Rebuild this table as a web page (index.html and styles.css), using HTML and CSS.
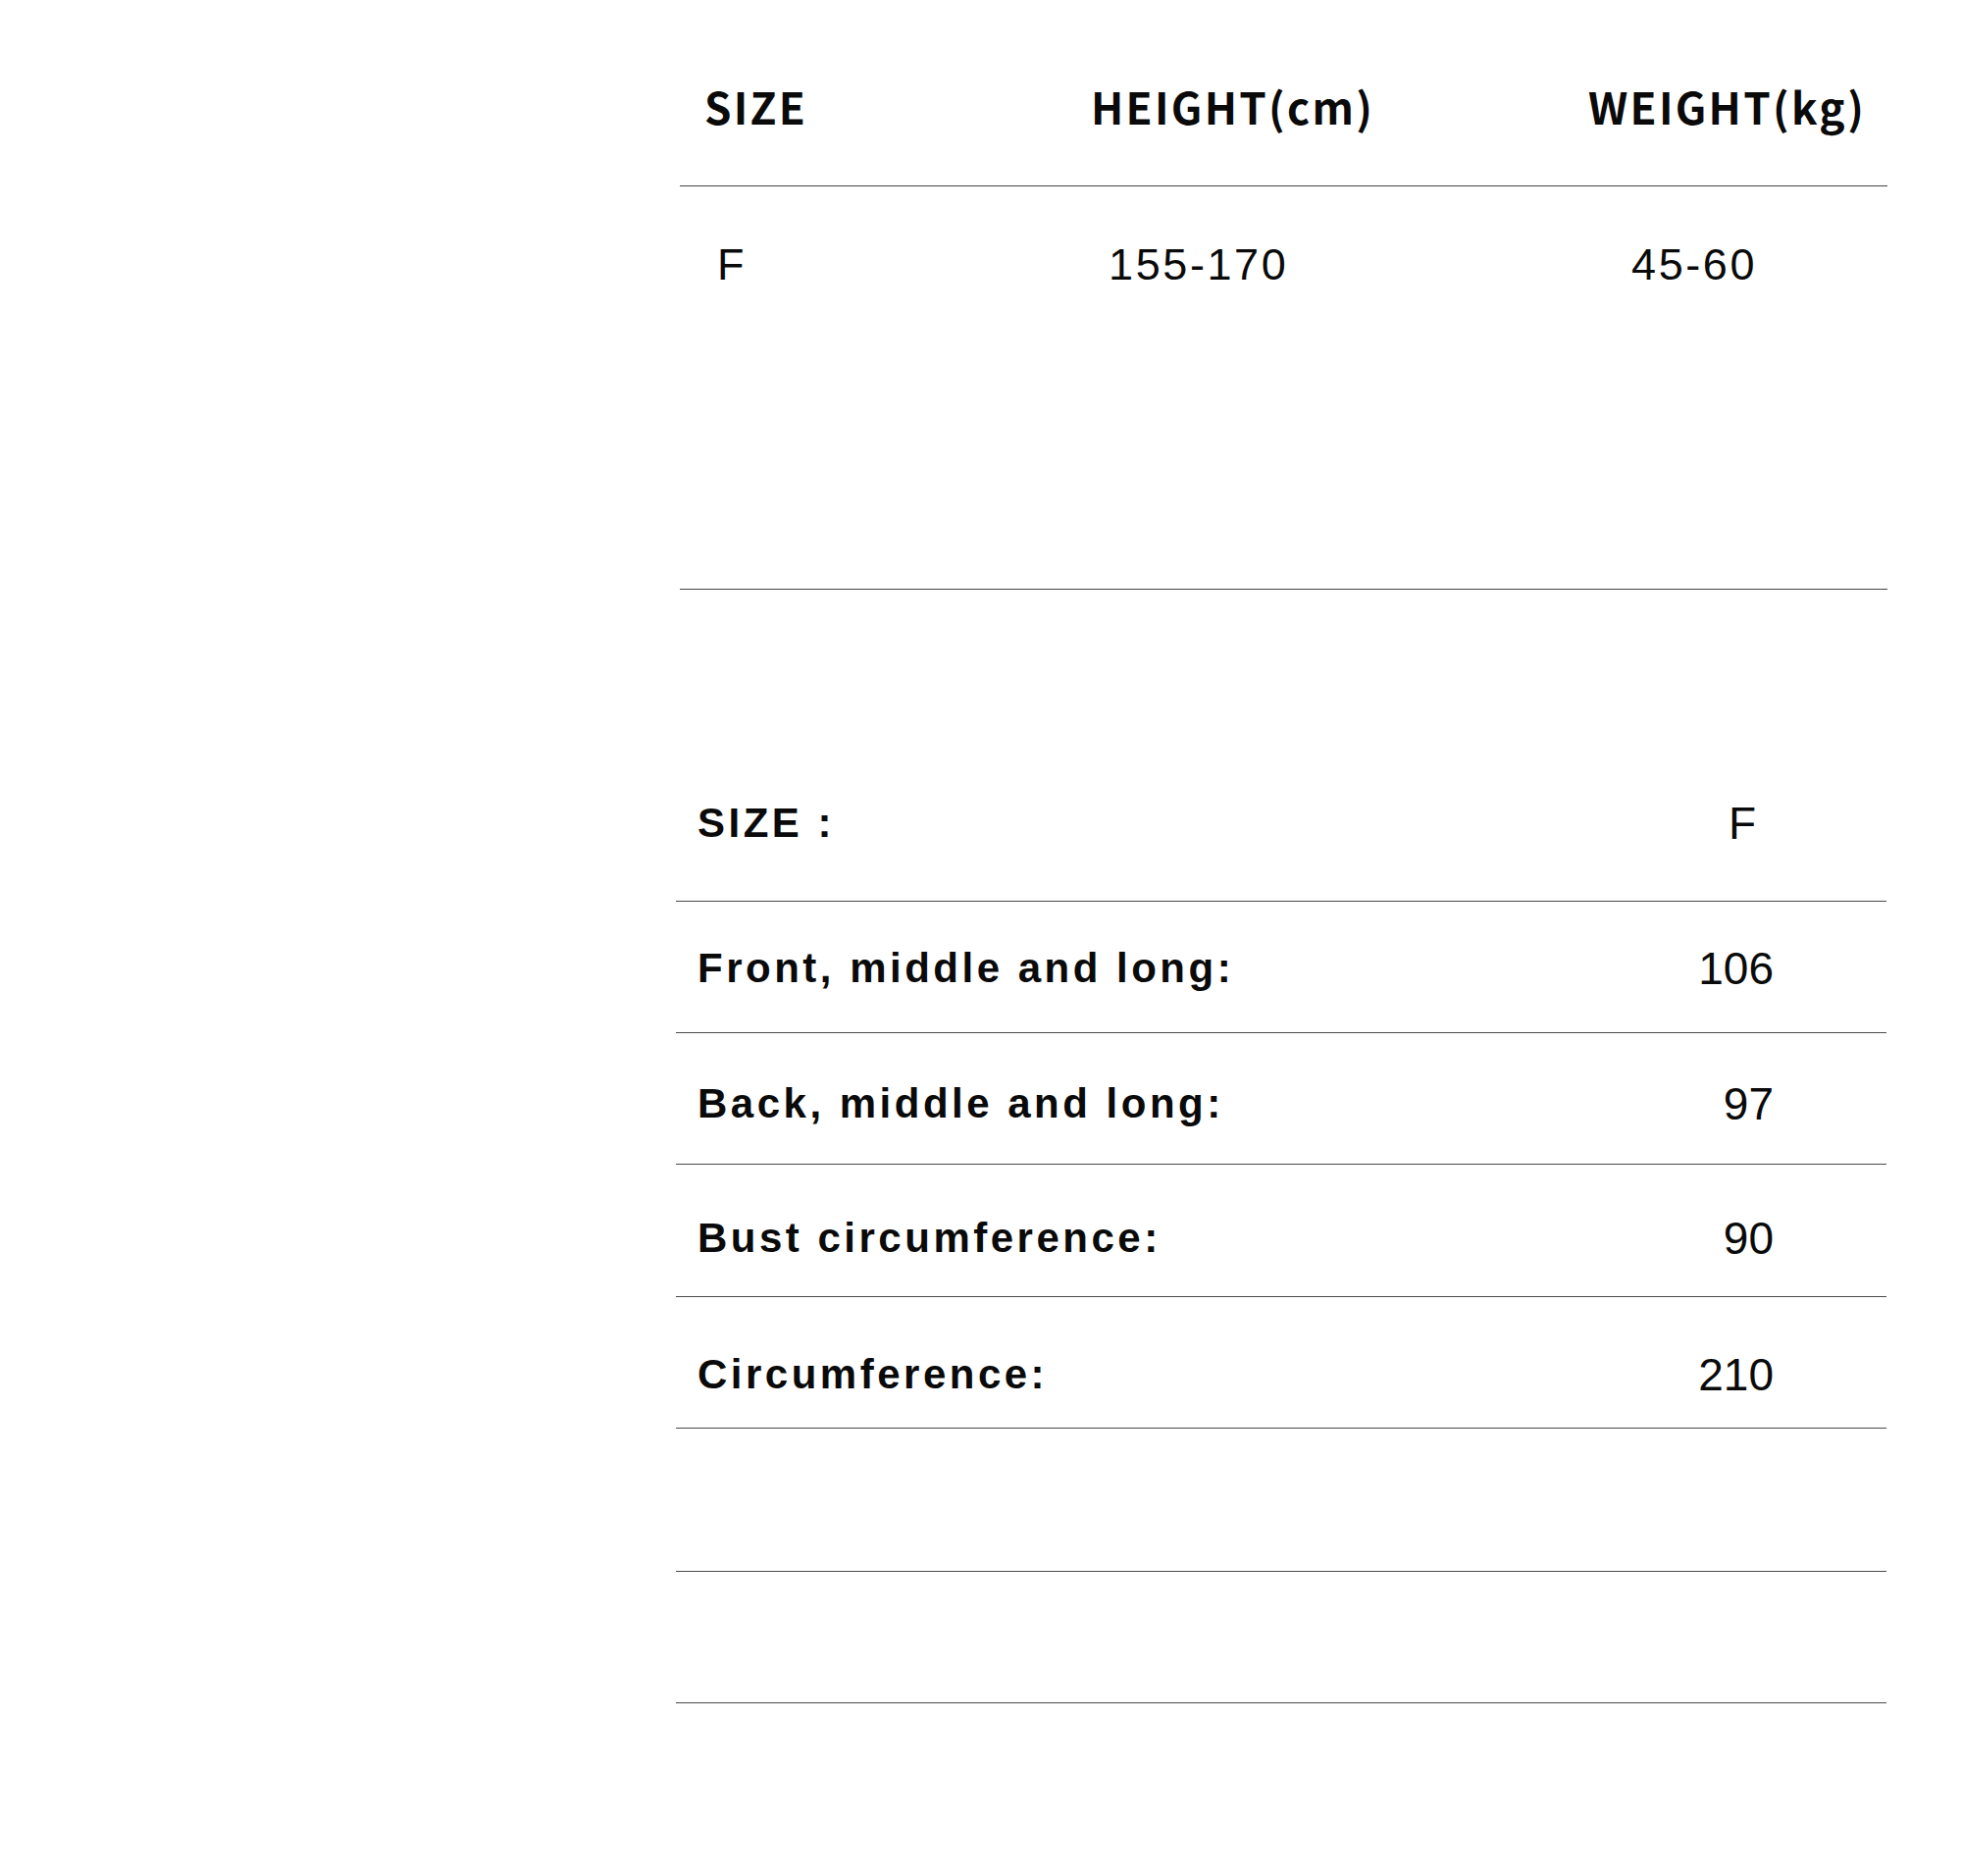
FILE: index.html
```html
<!DOCTYPE html>
<html lang="en">
<head>
<meta charset="utf-8">
<title>Size chart</title>
<link rel="stylesheet" href="styles.css">
</head>
<body>
<main class="page">
  <section class="fit">
    <div class="fit-row fit-head">
      <div class="fc fc-size">SIZE</div>
      <div class="fc fc-height">HEIGHT(cm)</div>
      <div class="fc fc-weight">WEIGHT(kg)</div>
    </div>
    <div class="fit-row fit-data">
      <div class="fc fc-size">F</div>
      <div class="fc fc-height">155-170</div>
      <div class="fc fc-weight">45-60</div>
    </div>
  </section>

  <section class="measure">
    <div class="m-row m-head">
      <div class="m-label">SIZE :</div>
      <div class="m-value m-value-f">F</div>
    </div>
    <div class="m-row m-body r1">
      <div class="m-label">Front, middle and long:</div>
      <div class="m-value">106</div>
    </div>
    <div class="m-row m-body r2">
      <div class="m-label">Back, middle and long:</div>
      <div class="m-value">97</div>
    </div>
    <div class="m-row m-body r3">
      <div class="m-label">Bust circumference:</div>
      <div class="m-value">90</div>
    </div>
    <div class="m-row m-body r4">
      <div class="m-label">Circumference:</div>
      <div class="m-value">210</div>
    </div>
    <div class="m-row m-empty m-empty-lg"></div>
    <div class="m-row m-empty"></div>
  </section>
</main>
</body>
</html>
```

FILE: styles.css
```css
html, body {
  margin: 0;
  padding: 0;
  background: #ffffff;
}

body {
  width: 2000px;
  min-height: 1912px;
  color: #0a0a0a;
}

.page {
  margin-left: 689px;
  width: 1234px;
  display: flex;
  flex-direction: column;
}

/* ---------- top fit table ---------- */
.fit {
  margin-left: 4px;
  width: 1231px;
  display: flex;
  flex-direction: column;
}

.fit-row {
  display: grid;
  grid-template-columns: 418px 504px 1fr;
  border-bottom: 1px solid #444444;
}

.fit-head {
  padding-top: 86px;
  padding-bottom: 59px;
  font-family: "Noto Sans CJK SC", "Noto Sans", sans-serif;
  font-weight: 700;
  font-size: 44px;
  line-height: 44px;
  letter-spacing: 2.3px;
}

.fit-head .fc-size { padding-left: 25px; }
.fit-head .fc-height { padding-left: 1px; }
.fit-head .fc-weight { padding-left: 4px; }

.fit-data {
  padding-top: 57px;
  padding-bottom: 308px;
  font-family: "Liberation Sans", Arial, sans-serif;
  font-weight: 400;
  font-size: 45px;
  line-height: 45px;
  letter-spacing: 2.6px;
}

.fit-data .fc-size { padding-left: 38px; }
.fit-data .fc-height { padding-left: 19px; }
.fit-data .fc-weight { padding-left: 48px; }

/* ---------- measurement table ---------- */
.measure {
  display: flex;
  flex-direction: column;
  padding-top: 215px;
}

.m-row {
  box-sizing: border-box;
  display: flex;
  align-items: flex-start;
  justify-content: space-between;
  border-bottom: 1px solid #4a4a4a;
  padding-left: 22px;
  padding-right: 115px;
}

.m-label {
  font-family: "Liberation Sans", Arial, sans-serif;
  font-weight: 700;
  font-size: 42px;
  line-height: 46px;
  letter-spacing: 3.5px;
}

.m-value {
  font-family: "Liberation Sans", Arial, sans-serif;
  font-weight: 400;
  font-size: 46px;
  line-height: 46px;
  text-align: right;
}

.m-value-f {
  padding-right: 18px;
}

.m-head {
  padding-bottom: 56px;
}

.m-body {
  height: 134px;
}

.m-body.r1 { padding-top: 45px; }
.m-body.r2 { padding-top: 49px; }
.m-body.r3 { padding-top: 52px; height: 135px; }
.m-body.r4 { padding-top: 56px; }

.m-empty {
  height: 134px;
}

.m-empty-lg {
  height: 146px;
}
```
